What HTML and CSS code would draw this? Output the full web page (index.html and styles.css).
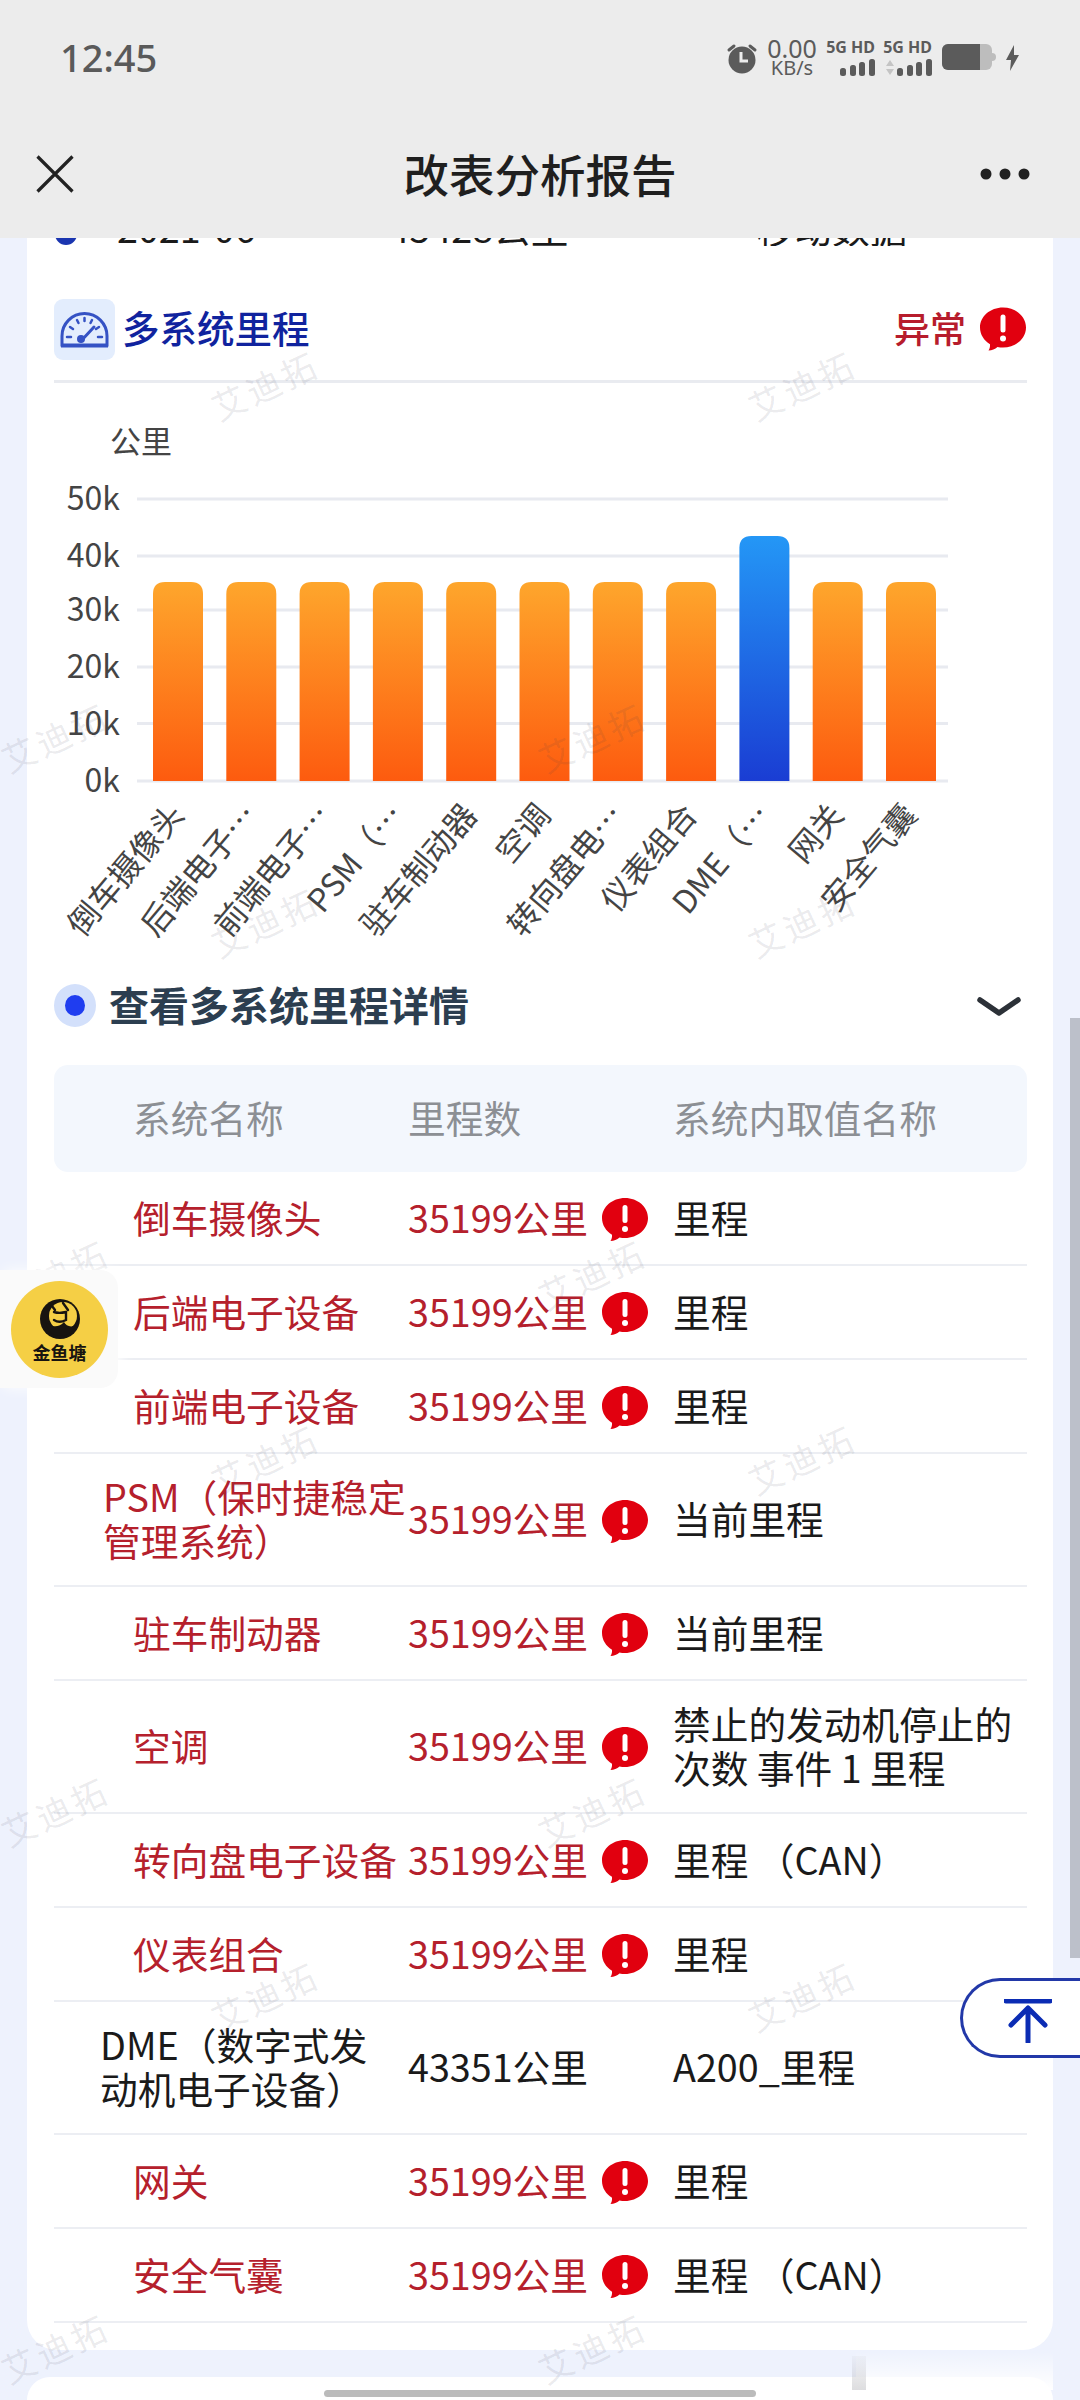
FILE: index.html
```html
<!DOCTYPE html>
<html lang="zh-CN">
<head>
<meta charset="utf-8">
<title>改表分析报告</title>
<link rel="stylesheet" href="styles.css">
</head>
<body>
<svg class="defs" width="0" height="0" aria-hidden="true">
  <defs>
    <symbol id="alert" viewBox="0 0 46 43">
      <path d="M23 0C35.700 0 46 8.900 46 20S35.700 40 23 40c-1.900 0-3.700-.2-5.500-.6C15 41.500 12 43 8.500 43c1.300-2 1.700-4.200 1.500-6.300C4 33 0 27 0 20 0 8.900 10.300 0 23 0z" fill="#e1000f"/>
      <rect x="20.500" y="7" width="5" height="18" rx="2.500" fill="#fff"/>
      <circle cx="23" cy="31" r="3" fill="#fff"/>
    </symbol>
    <linearGradient id="orange" x1="0" y1="0" x2="0" y2="1">
      <stop offset="0" stop-color="#fea62c"/>
      <stop offset="1" stop-color="#fd5b0f"/>
    </linearGradient>
    <linearGradient id="blue" x1="0" y1="0" x2="0" y2="1">
      <stop offset="0" stop-color="#2497f6"/>
      <stop offset="1" stop-color="#1a3dd3"/>
    </linearGradient>
  </defs>
</svg>

<header class="top">
  <div class="status">
    <span class="time">12:45</span>
    <div class="status-right">
      <svg class="alarm" viewBox="0 0 32 32">
        <circle cx="16" cy="18" r="13.500" fill="#5b5b5b"/>
        <path d="M3 8l5-4M29 8l-5-4" stroke="#5b5b5b" stroke-width="3" stroke-linecap="round"/>
        <path d="M15 10v9h7" fill="none" stroke="#ececec" stroke-width="3"/>
      </svg>
      <div class="speed"><span class="speed-num">0.00</span><span class="speed-unit">KB/s</span></div>
      <div class="net">
        <span class="net-label">5G HD</span>
        <svg class="signal" viewBox="0 0 35 17">
          <rect x="0" y="9" width="6" height="8" rx="2.500"/><rect x="10" y="6" width="6" height="11" rx="2.500"/><rect x="19" y="3" width="6" height="14" rx="2.500"/><rect x="29" y="0" width="6" height="17" rx="2.500"/>
        </svg>
      </div>
      <div class="net">
        <span class="net-label">5G HD</span>
        <svg class="signal-wide" viewBox="0 0 48 17">
          <path d="M2 7l4-6 4 6zM2 10l4 6 4-6z" fill="#c4c4c4"/>
          <rect x="13" y="9" width="6" height="8" rx="2.500"/><rect x="23" y="6" width="6" height="11" rx="2.500"/><rect x="32" y="3" width="6" height="14" rx="2.500"/><rect x="42" y="0" width="6" height="17" rx="2.500"/>
        </svg>
      </div>
      <svg class="battery" viewBox="0 0 54 27">
        <rect x="0" y="0" width="50" height="26" rx="6" fill="#bdbdbd"/>
        <path d="M6 0h32v26H6a6 6 0 0 1-6-6V6a6 6 0 0 1 6-6z" fill="#5b5b5b"/>
        <path d="M50 9a4 4 0 0 1 0 8z" fill="#bdbdbd"/>
      </svg>
      <svg class="bolt" viewBox="0 0 13 26">
        <path d="M8 0L0 15h5l-1 11 9-16H8z" fill="#5b5b5b"/>
      </svg>
    </div>
  </div>
  <nav class="nav">
    <svg class="close" viewBox="0 0 38 38"><path d="M1.500 1.500l35 35M36.500 1.500l-35 35" fill="none" stroke="#222" stroke-width="3.200"/></svg>
    <h1 class="title">改表分析报告</h1>
    <svg class="more" viewBox="0 0 50 12"><circle cx="6" cy="6" r="5.500"/><circle cx="25" cy="6" r="5.500"/><circle cx="44" cy="6" r="5.500"/></svg>
  </nav>
</header>

<main class="card">
  <div class="peek">
    <div class="peek-row">
      <span class="peek-dot"></span>
      <span class="peek-a">2021-06</span>
      <span class="peek-b">45428公里</span>
      <span class="peek-c">移动数据</span>
    </div>
  </div>

  <div class="sec-head">
    <div class="sec-title">
      <svg class="gauge" viewBox="0 0 61 61">
        <rect width="61" height="61" rx="9" fill="#e3edfd"/>
        <path d="M8 46V37a22.500 22.500 0 0 1 45 0v9z" fill="none" stroke="#3552c4" stroke-width="3"/>
        <path d="M7 47h47" stroke="#3552c4" stroke-width="3"/>
        <path d="M13 38h4M44 38h4M16 28l3 2M45 28l-3 2M23 21l1.500 3M38 21l-1.500 3M30.500 19v3" stroke="#3552c4" stroke-width="2.500" stroke-linecap="round"/>
        <path d="M27 42l13-14" stroke="#3552c4" stroke-width="3" stroke-linecap="round"/>
        <circle cx="27" cy="40" r="4" fill="#3552c4"/>
      </svg>
      <span class="sec-name">多系统里程</span>
    </div>
    <div class="sec-flag">
      <span class="flag-text">异常</span>
      <svg class="flag-icon"><use href="#alert"/></svg>
    </div>
  </div>

  <svg class="chart" viewBox="54 383 973 592">
    <text class="ax" x="110" y="453">公里</text>
    <g class="grid">
      <path d="M137 499H948M137 556H948M137 610H948M137 667H948M137 723.500H948M137 781H948"/>
    </g>
    <g class="ay">
      <text x="120" y="510">50k</text>
      <text x="120" y="567">40k</text>
      <text x="120" y="621">30k</text>
      <text x="120" y="678">20k</text>
      <text x="120" y="735">10k</text>
      <text x="120" y="792">0k</text>
    </g>
    <g fill="url(#orange)">
      <path d="M153 781V594q0-12 12-12h26q12 0 12 12V781z"/>
      <path d="M226.300 781V594q0-12 12-12h26q12 0 12 12V781z"/>
      <path d="M299.600 781V594q0-12 12-12h26q12 0 12 12V781z"/>
      <path d="M372.900 781V594q0-12 12-12h26q12 0 12 12V781z"/>
      <path d="M446.200 781V594q0-12 12-12h26q12 0 12 12V781z"/>
      <path d="M519.500 781V594q0-12 12-12h26q12 0 12 12V781z"/>
      <path d="M592.800 781V594q0-12 12-12h26q12 0 12 12V781z"/>
      <path d="M666.100 781V594q0-12 12-12h26q12 0 12 12V781z"/>
      <path d="M812.700 781V594q0-12 12-12h26q12 0 12 12V781z"/>
      <path d="M886 781V594q0-12 12-12h26q12 0 12 12V781z"/>
    </g>
    <path fill="url(#blue)" d="M739.400 781V548q0-12 12-12h26q12 0 12 12V781z"/>
    <g class="xl">
      <text transform="translate(175 807) rotate(-50)">倒车摄像头</text>
      <text transform="translate(248.300 807) rotate(-50)">后端电子…</text>
      <text transform="translate(321.600 807) rotate(-50)">前端电子…</text>
      <text transform="translate(394.900 807) rotate(-50)">PSM（…</text>
      <text transform="translate(468.200 807) rotate(-50)">驻车制动器</text>
      <text transform="translate(541.500 807) rotate(-50)">空调</text>
      <text transform="translate(614.800 807) rotate(-50)">转向盘电…</text>
      <text transform="translate(688.100 807) rotate(-50)">仪表组合</text>
      <text transform="translate(761.400 807) rotate(-50)">DME（…</text>
      <text transform="translate(834.700 807) rotate(-50)">网关</text>
      <text transform="translate(908 807) rotate(-50)">安全气囊</text>
    </g>
  </svg>

  <div class="detail-head">
    <div class="detail-title">
      <span class="detail-dot"></span>
      <span class="detail-name">查看多系统里程详情</span>
    </div>
    <svg class="chevron" viewBox="0 0 44 20"><path d="M3 3l19 13L41 3" fill="none" stroke="#2c3138" stroke-width="5.500" stroke-linecap="round" stroke-linejoin="round"/></svg>
  </div>

  <div class="table">
    <div class="thead">
      <span class="name">系统名称</span>
      <span>里程数</span>
      <span>系统内取值名称</span>
    </div>
    <div class="row bad"><span class="name">倒车摄像头</span><span class="km">35199公里<svg class="tip"><use href="#alert"/></svg></span><span class="val">里程</span></div>
    <div class="row bad"><span class="name">后端电子设备</span><span class="km">35199公里<svg class="tip"><use href="#alert"/></svg></span><span class="val">里程</span></div>
    <div class="row bad"><span class="name">前端电子设备</span><span class="km">35199公里<svg class="tip"><use href="#alert"/></svg></span><span class="val">里程</span></div>
    <div class="row bad"><span class="name long-a">PSM（保时捷稳定管理系统）</span><span class="km">35199公里<svg class="tip"><use href="#alert"/></svg></span><span class="val">当前里程</span></div>
    <div class="row bad"><span class="name">驻车制动器</span><span class="km">35199公里<svg class="tip"><use href="#alert"/></svg></span><span class="val">当前里程</span></div>
    <div class="row bad"><span class="name">空调</span><span class="km">35199公里<svg class="tip"><use href="#alert"/></svg></span><span class="val">禁止的发动机停止的次数 事件 1 里程</span></div>
    <div class="row bad"><span class="name">转向盘电子设备</span><span class="km">35199公里<svg class="tip"><use href="#alert"/></svg></span><span class="val">里程 （CAN）</span></div>
    <div class="row bad"><span class="name">仪表组合</span><span class="km">35199公里<svg class="tip"><use href="#alert"/></svg></span><span class="val">里程</span></div>
    <div class="row"><span class="name long-b">DME（数字式发动机电子设备）</span><span class="km">43351公里</span><span class="val">A200_里程</span></div>
    <div class="row bad"><span class="name">网关</span><span class="km">35199公里<svg class="tip"><use href="#alert"/></svg></span><span class="val">里程</span></div>
    <div class="row bad"><span class="name">安全气囊</span><span class="km">35199公里<svg class="tip"><use href="#alert"/></svg></span><span class="val">里程 （CAN）</span></div>
  </div>
</main>

<section class="next-card"></section>

<div class="wm-col wm-a"><span>艾迪拓</span><span>艾迪拓</span><span>艾迪拓</span><span>艾迪拓</span></div>
<div class="wm-col wm-b"><span>艾迪拓</span><span>艾迪拓</span><span>艾迪拓</span><span>艾迪拓</span></div>
<div class="wm-col wm-c"><span>艾迪拓</span><span>艾迪拓</span><span>艾迪拓</span><span>艾迪拓</span></div>
<div class="wm-col wm-d"><span>艾迪拓</span><span>艾迪拓</span><span>艾迪拓</span><span>艾迪拓</span></div>

<div class="scrollbar"></div>

<aside class="fish-wrap">
  <div class="fish">
    <svg class="fish-mark" viewBox="0 0 42 40">
      <circle cx="21" cy="20" r="20" fill="#171410"/>
      <circle cx="24" cy="17" r="14" fill="#f5cf45"/>
      <path d="M6 20c3 8 13 10 19 3 2 4 7 6 12 3-3 8-10 11-17 11C13 37 7 29 6 20z" fill="#171410"/>
      <path d="M15 13c3 1 8 1 12 0v8c-4 2-9 2-12 0M24 4l5 7M13 7l3 4" fill="none" stroke="#171410" stroke-width="2.400" stroke-linecap="round"/>
    </svg>
    <span class="fish-text">金鱼塘</span>
  </div>
</aside>

<button class="to-top" type="button" aria-label="返回顶部">
  <svg class="to-top-icon" viewBox="0 0 48 44"><path d="M2 2h44M24 43V9M7 26L24 9l17 17" fill="none" stroke="#0b2cb4" stroke-width="5" stroke-linecap="round" stroke-linejoin="round"/></svg>
</button>

<div class="fade"></div>
<div class="streak"></div>
<div class="home-bar"></div>
</body>
</html>
```

FILE: styles.css
```css
* { box-sizing: border-box; }

html, body {
  margin: 0;
  padding: 0;
}

body {
  position: relative;
  width: 1080px;
  height: 2400px;
  overflow: hidden;
  background: #eef2fd;
  font-family: "Noto Sans CJK SC", "Noto Sans", sans-serif;
  color: #1a1a1a;
}

.defs { position: absolute; }

/* Header */
.top {
  position: relative;
  z-index: 5;
  height: 238px;
  background: #ececec;
}

.status {
  display: flex;
  align-items: center;
  justify-content: space-between;
  height: 115px;
  padding: 0 61px 0 60px;
}

.time {
  margin-top: -2px;
  font-family: "Noto Sans", sans-serif;
  font-size: 38px;
  font-weight: 500;
  color: #5a5a5a;
}

.status-right {
  display: flex;
  align-items: center;
}

.alarm { width: 32px; height: 32px; margin-right: 8px; }

.speed {
  display: flex;
  flex-direction: column;
  align-items: center;
  width: 52px;
  margin-right: 9px;
  font-family: "Noto Sans", sans-serif;
  color: #5b5b5b;
}

.speed-num { font-size: 25px; line-height: 21px; }
.speed-unit { font-size: 20px; line-height: 18px; }

.net {
  display: flex;
  flex-direction: column;
  align-items: flex-end;
  width: 48px;
  margin-right: 9px;
}

.net-label {
  font-family: "Noto Sans", sans-serif;
  font-size: 16px;
  font-weight: 700;
  line-height: 17px;
  white-space: nowrap;
  color: #5b5b5b;
}

.signal { width: 35px; height: 17px; margin-top: 3px; fill: #5b5b5b; }
.signal-wide { width: 48px; height: 17px; margin-top: 3px; fill: #5b5b5b; }

.battery { width: 54px; height: 27px; margin-right: 10px; margin-left: 1px; }
.bolt { width: 13px; height: 26px; }

.nav {
  display: grid;
  grid-template-columns: 1fr auto 1fr;
  align-items: center;
  height: 118px;
  padding: 0 36px;
}

.close { width: 38px; height: 38px; }

.title {
  margin: 0 0 3px;
  font-size: 45.500px;
  font-weight: 500;
  line-height: 60px;
  color: #1f1f1f;
}

.more { justify-self: end; width: 50px; height: 12px; margin-right: 14px; fill: #222; }

/* Card */
.card {
  width: 1026px;
  height: 2112px;
  margin: 0 27px;
  padding: 0 26px 0 27px;
  background: #fff;
  border-radius: 0 0 30px 30px;
}

.peek {
  height: 8px;
  overflow: hidden;
}

.peek-row {
  display: flex;
  align-items: center;
  height: 44px;
  margin-top: -33px;
  font-size: 37.700px;
  line-height: 44px;
}

.peek-dot {
  width: 22px;
  height: 22px;
  margin-top: 14px;
  margin-left: 1px;
  border-radius: 50%;
  background: #1a35b0;
}

.peek-a { margin-left: 40px; }
.peek-b { margin-left: 133px; }
.peek-c { margin-left: 188px; }

.sec-head {
  display: flex;
  align-items: center;
  justify-content: space-between;
  height: 137px;
  padding: 53px 1px 21px 0;
  border-bottom: 3px solid #e9ebf0;
}

.sec-title { display: flex; align-items: center; }
.gauge { width: 61px; height: 61px; margin-right: 7px; }

.sec-name {
  margin-bottom: 5px;
  font-size: 37.500px;
  font-weight: 500;
  line-height: 50px;
  color: #10239e;
}

.sec-flag { display: flex; align-items: center; }

.flag-text {
  margin-bottom: 5px;
  font-size: 36px;
  font-weight: 500;
  line-height: 50px;
  color: #b71c2c;
}

.flag-icon { width: 46px; height: 44px; margin-left: 14px; }

/* Chart */
.chart {
  display: block;
  width: 973px;
  height: 592px;
  font-family: "Noto Sans CJK SC", "Noto Sans", sans-serif;
}

.ax { font-size: 31px; fill: #444; }
.grid path { fill: none; stroke: #e8eaf0; stroke-width: 3; }
.ay text { font-size: 32px; fill: #444; text-anchor: end; }
.xl text { font-size: 32px; fill: #444; text-anchor: end; dominant-baseline: central; }

/* Detail */
.detail-head {
  display: flex;
  align-items: center;
  justify-content: space-between;
  height: 43px;
  margin-top: 9px;
  padding-right: 6px;
}

.detail-title { display: flex; align-items: center; }

.detail-dot {
  display: block;
  width: 42px;
  height: 43px;
  margin-right: 13px;
  border: 11px solid #d3e0fb;
  border-radius: 50%;
  background: #1f3df0;
}

.detail-name {
  margin-bottom: 3px;
  font-size: 40px;
  font-weight: 700;
  line-height: 50px;
  color: #2c3e50;
}

.chevron { width: 44px; height: 20px; margin-top: 2px; }

/* Table */
.table { margin-top: 38px; font-size: 37.700px; }

.thead {
  display: grid;
  grid-template-columns: 354px 265px 1fr;
  align-items: center;
  height: 107px;
  padding-bottom: 4px;
  border-radius: 14px;
  background: #f3f7fd;
  color: #8c8f94;
  line-height: 44px;
}

.name { padding-left: 79px; }
.long-a { padding-left: 49px; }
.long-b { padding-left: 46px; padding-right: 36px; }

.row {
  display: grid;
  grid-template-columns: 354px 265px 1fr;
  align-items: center;
  min-height: 94px;
  padding: 20px 0 23px;
  border-bottom: 2px solid #eceef3;
  line-height: 44px;
}

.bad .name, .bad .km { color: #b5202c; }

.km {
  display: flex;
  align-items: center;
  height: 44px;
}

.tip { width: 46px; height: 43px; margin: 6px 0 0 14px; flex: none; }

.next-card {
  width: 1026px;
  height: 23px;
  margin: 27px 27px 0;
  background: #fff;
  border-radius: 30px 30px 0 0;
}

/* Watermarks */
.wm-col {
  position: absolute;
  z-index: 1;
  display: flex;
  flex-direction: column;
  gap: 487px;
  width: 130px;
  pointer-events: none;
}

.wm-col span {
  display: block;
  height: 50px;
  font-size: 34px;
  line-height: 50px;
  letter-spacing: 4px;
  text-align: center;
  white-space: nowrap;
  color: rgba(60, 60, 80, 0.11);
  transform: rotate(-25deg);
}

.wm-a { left: -10px; top: 712px; }
.wm-b { left: 200px; top: 360px; }
.wm-c { left: 527px; top: 712px; }
.wm-d { left: 737px; top: 360px; }

/* Overlays */
.scrollbar {
  position: absolute;
  z-index: 2;
  left: 1070px;
  top: 1018px;
  width: 10px;
  height: 940px;
  background: #bcc0ca;
}

.fish-wrap {
  position: absolute;
  z-index: 3;
  left: 0;
  top: 1270px;
  width: 118px;
  height: 118px;
  padding: 11px;
  background: #fafafa;
  border-radius: 0 18px 18px 0;
  box-shadow: 4px 0 14px rgba(255, 255, 255, 0.9);
}

.fish {
  display: flex;
  flex-direction: column;
  align-items: center;
  width: 97px;
  height: 97px;
  padding-top: 18px;
  border-radius: 50%;
  background: #f5cf45;
}

.fish-mark { width: 42px; height: 40px; }

.fish-text {
  margin-top: 3px;
  font-size: 18px;
  font-weight: 700;
  line-height: 20px;
  color: #171410;
}

.to-top {
  position: absolute;
  z-index: 4;
  left: 960px;
  top: 1978px;
  display: flex;
  align-items: flex-start;
  width: 120px;
  height: 80px;
  padding: 18px 0 0 41px;
  background: #fff;
  border: 3px solid #2238a8;
  border-right: 0;
  border-radius: 40px 0 0 40px;
}

.to-top-icon { width: 48px; height: 44px; }

.fade {
  position: absolute;
  z-index: 2;
  left: 856px;
  top: 2352px;
  width: 197px;
  height: 38px;
  background: linear-gradient(to bottom, rgba(255, 255, 255, 0), #fff);
}

.streak {
  position: absolute;
  z-index: 2;
  left: 852px;
  top: 2356px;
  width: 14px;
  height: 34px;
  background: linear-gradient(to bottom, rgba(190, 190, 195, 0.1), rgba(170, 170, 175, 0.4));
}

.home-bar {
  position: absolute;
  z-index: 6;
  left: 324px;
  top: 2390px;
  width: 432px;
  height: 7px;
  border-radius: 4px;
  background: #bbb;
}
```
